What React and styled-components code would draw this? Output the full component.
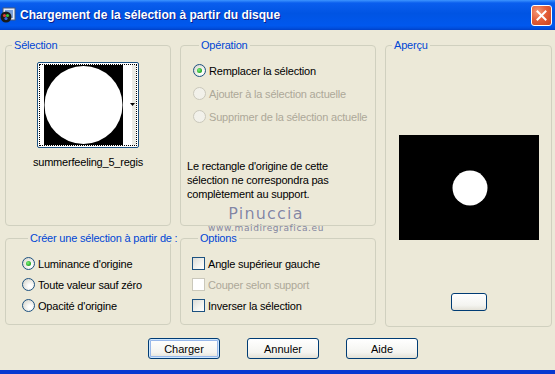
import React from 'react'
import styled, { createGlobalStyle } from 'styled-components'

const GlobalStyle = createGlobalStyle`
  html, body {
    margin: 0;
    padding: 0;
    background: #ece9d8;
  }
  body {
    font-family: "Liberation Sans", Arial, sans-serif;
    font-size: 11px;
    letter-spacing: -0.2px;
    color: #000;
  }
`

const Window = styled.div`
  position: relative;
  width: 555px;
  height: 374px;
  display: flex;
  flex-direction: column;
  overflow: hidden;
`

const TitleBar = styled.div`
  height: 30px;
  flex: none;
  display: flex;
  align-items: center;
  padding-right: 3px;
  background: linear-gradient(to bottom, #3d95ff 0%, #0a5eee 10%, #0054e3 45%, #0058ee 85%, #0050e0 93%, #0040c8 100%);
`

const TitleIcon = styled.svg`
  flex: none;
  width: 16px;
  height: 16px;
  margin-right: 4px;
`

const TitleText = styled.div`
  flex: 1;
  color: #fff;
  font-family: "Liberation Sans", Arial, sans-serif;
  font-weight: bold;
  font-size: 12px;
  letter-spacing: 0;
  text-shadow: 1px 1px 0 #0a1e8c;
`

const CloseButton = styled.div`
  width: 21px;
  height: 21px;
  box-sizing: border-box;
  border: 1px solid #fff;
  border-radius: 3px;
  background: radial-gradient(circle at 30% 30%, #f39a7a 0%, #e5603a 45%, #c8411e 100%);
  display: flex;
  align-items: center;
  justify-content: center;
`

const Body = styled.div`
  flex: 1;
  display: flex;
  flex-direction: column;
  padding: 9px 0 0 5px;
  border-bottom: 4px solid #0838d0;
`

const Grid = styled.div`
  display: grid;
  grid-template-columns: 166px 196px 167px;
  grid-template-rows: 187px 95px;
  column-gap: 9px;
  row-gap: 6px;
`

const Group = styled.fieldset`
  margin: 0;
  padding: 0;
  min-width: 0;
  box-sizing: border-box;
  border: 1px solid #d0d0bf;
  border-radius: 4px;
  display: flex;
  flex-direction: column;
  align-items: ${p => (p.$center ? 'center' : 'stretch')};
  padding-top: ${p => p.$top || 0}px;
  padding-left: ${p => p.$left || 0}px;
  grid-row: ${p => (p.$span ? '1 / span 2' : 'auto')};
  grid-column: ${p => (p.$span ? '3' : 'auto')};
  height: ${p => (p.$short ? '93px' : 'auto')};
  white-space: nowrap;
`

const Legend = styled.legend`
  color: #0046d5;
  font-size: 11px;
  line-height: 12px;
  margin-left: 6px;
  padding: 0 2px;
`

const Thumb = styled.div`
  width: 102px;
  height: 86px;
  box-sizing: border-box;
  border: 1px solid #1c5180;
  border-radius: 2px;
  padding: 1px;
  background: #fff;
`

const Focus = styled.div`
  border: 1px dotted #000;
  height: 80px;
  display: flex;
`

const FileName = styled.div`
  margin-top: 8px;
  line-height: 13px;
`

const OptionRow = styled.div`
  display: flex;
  align-items: center;
  gap: 3px;
  height: ${p => p.$h || 21}px;
  color: ${p => (p.$disabled ? '#aca899' : '#000')};
`

const Radio = styled.span`
  flex: none;
  width: 13px;
  height: 13px;
  box-sizing: border-box;
  border-radius: 50%;
  border: 1px solid ${p => (p.$disabled ? '#cac8bb' : '#1c5180')};
  background: ${p => (p.$disabled
    ? '#f2f1ea'
    : 'radial-gradient(circle at 65% 65%, #ffffff 15%, #e6e5de 60%, #cfcec6 100%)')};
  display: flex;
  align-items: center;
  justify-content: center;

  &::after {
    content: '';
    display: ${p => (p.$checked ? 'block' : 'none')};
    width: 5px;
    height: 5px;
    border-radius: 50%;
    background: radial-gradient(circle at 40% 40%, #7ef57e, #21a121 70%);
  }
`

const Check = styled.span`
  flex: none;
  width: 13px;
  height: 13px;
  box-sizing: border-box;
  border: 1px solid ${p => (p.$disabled ? '#cac8bb' : '#1c5180')};
  background: ${p => (p.$disabled ? '#fff' : 'linear-gradient(135deg, #dcdcd7 0%, #f4f4f0 60%, #fff 100%)')};
`

const Note = styled.p`
  margin: 31px 0 0 -6px;
  line-height: 14px;
`

const Preview = styled.svg`
  margin-top: 84px;
  width: 140px;
  height: 105px;
  display: block;
`

const SmallButton = styled.div`
  margin-top: 53px;
  width: 36px;
  height: 18px;
  box-sizing: border-box;
  border: 1px solid #003c74;
  border-radius: 3px;
  background: linear-gradient(#fff, #f4f4f0 70%, #e4e2d8);
`

const ButtonRow = styled.div`
  display: flex;
  gap: 27px;
  margin-top: 11px;
  padding-left: 143px;
`

const Button = styled.button`
  width: 72px;
  height: 21px;
  padding: 0;
  box-sizing: border-box;
  border: 1px solid #003c74;
  border-radius: 3px;
  background: linear-gradient(#ffffff 0%, #f4f4f0 70%, #e3e1d6 100%);
  font-family: "Liberation Sans", Arial, sans-serif;
  font-size: 11px;
  color: #000;
  box-shadow: ${p => (p.$default ? 'inset 0 0 0 1px #cee7ff, inset 0 0 0 2px #98b8ea' : 'none')};
`

const Watermark = styled.div`
  position: absolute;
  left: 203px;
  top: 204px;
  width: 126px;
  text-align: center;
  color: #8486a0;
  pointer-events: none;
  font-family: "DejaVu Sans", Verdana, sans-serif;
  letter-spacing: 0;
`

const WmName = styled.div`
  font-size: 16px;
  letter-spacing: 1.2px;
  line-height: 19px;
  text-shadow: 0 0 1px #fff;
`

const WmUrl = styled.div`
  font-size: 9px;
  letter-spacing: 0.6px;
  line-height: 11px;
`

const App = () => {
  return (
    <>
      <GlobalStyle />
      <Window>
        <TitleBar>
          <TitleIcon viewBox="0 0 16 16">
            <rect x="3" y="1" width="12" height="12" fill="#e8eef8" stroke="#4a5a78" />
            <rect x="5" y="3" width="8" height="8" fill="#7aa0d8" />
            <circle cx="6" cy="10" r="5.5" fill="#1a1a1a" />
            <circle cx="4.5" cy="8.5" r="1.6" fill="#e03a3a" />
            <circle cx="7.5" cy="8.5" r="1.6" fill="#3ac03a" />
            <circle cx="6" cy="11.5" r="1.6" fill="#3a6ae0" />
          </TitleIcon>
          <TitleText>Chargement de la sélection à partir du disque</TitleText>
          <CloseButton>
            <svg width="11" height="11" viewBox="0 0 11 11">
              <path d="M1.5 1.5 L9.5 9.5 M9.5 1.5 L1.5 9.5" stroke="#fff" strokeWidth="2" strokeLinecap="square" />
            </svg>
          </CloseButton>
        </TitleBar>

        <Body>
          <Grid>
            <Group $center $top={11}>
              <Legend>Sélection</Legend>
              <Thumb>
                <Focus>
                  <svg width="96" height="80" viewBox="0 0 96 80">
                    <rect x="0" y="0" width="96" height="80" fill="#fff" />
                    <rect x="4" y="0" width="79" height="80" fill="#000" />
                    <circle cx="43.5" cy="40" r="39" fill="#fff" />
                    <rect x="92" y="0" width="4" height="80" fill="#ecece6" />
                    <path d="M90 38 L95 38 L92.5 41 Z" fill="#000" />
                  </svg>
                </Focus>
              </Thumb>
              <FileName>summerfeeling_5_regis</FileName>
            </Group>

            <Group $top={8} $left={12}>
              <Legend>Opération</Legend>
              <OptionRow $h={23}>
                <Radio $checked />
                Remplacer la sélection
              </OptionRow>
              <OptionRow $h={23} $disabled>
                <Radio $disabled />
                Ajouter à la sélection actuelle
              </OptionRow>
              <OptionRow $h={23} $disabled>
                <Radio $disabled />
                Supprimer de la sélection actuelle
              </OptionRow>
              <Note>
                Le rectangle d'origine de cette<br />
                sélection ne correspondra pas<br />
                complètement au support.
              </Note>
            </Group>

            <Group $center $span>
              <Legend>Aperçu</Legend>
              <Preview viewBox="0 0 140 105">
                <rect width="140" height="105" fill="#000" />
                <circle cx="71" cy="53" r="17.5" fill="#fff" />
              </Preview>
              <SmallButton />
            </Group>

            <Group $short $top={9} $left={16}>
              <Legend>Créer une sélection à partir de :</Legend>
              <OptionRow>
                <Radio $checked />
                Luminance d'origine
              </OptionRow>
              <OptionRow>
                <Radio />
                Toute valeur sauf zéro
              </OptionRow>
              <OptionRow>
                <Radio />
                Opacité d'origine
              </OptionRow>
            </Group>

            <Group $short $top={9} $left={11}>
              <Legend>Options</Legend>
              <OptionRow>
                <Check />
                Angle supérieur gauche
              </OptionRow>
              <OptionRow $disabled>
                <Check $disabled />
                Couper selon support
              </OptionRow>
              <OptionRow>
                <Check />
                Inverser la sélection
              </OptionRow>
            </Group>
          </Grid>

          <ButtonRow>
            <Button $default>Charger</Button>
            <Button>Annuler</Button>
            <Button>Aide</Button>
          </ButtonRow>
        </Body>

        <Watermark>
          <WmName>Pinuccia</WmName>
          <WmUrl>www.maidiregrafica.eu</WmUrl>
        </Watermark>
      </Window>
    </>
  )
}

export default App
